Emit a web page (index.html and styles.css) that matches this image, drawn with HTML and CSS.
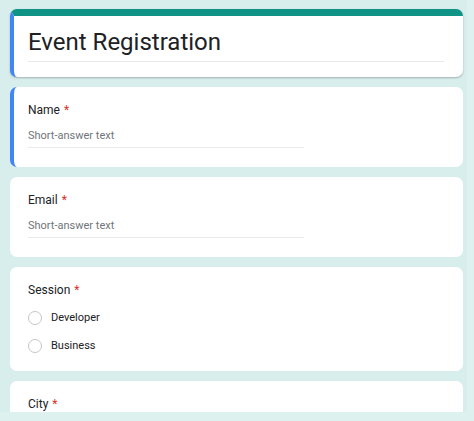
FILE: index.html
```html
<!DOCTYPE html>
<html lang="en">
<head>
<meta charset="utf-8">
<title>Event Registration</title>
<link rel="stylesheet" href="styles.css">
</head>
<body>
<div class="viewport">
  <main class="form">
    <section class="card header-card">
      <h1 class="form-title">Event Registration</h1>
    </section>

    <section class="card card-active">
      <div class="q-label">Name <span class="req">*</span></div>
      <div class="short-answer">Short-answer text</div>
    </section>

    <section class="card">
      <div class="q-label">Email <span class="req">*</span></div>
      <div class="short-answer">Short-answer text</div>
    </section>

    <section class="card card-choice">
      <div class="q-label">Session <span class="req">*</span></div>
      <div class="options">
        <label class="option"><span class="radio"></span><span class="opt-text">Developer</span></label>
        <label class="option"><span class="radio"></span><span class="opt-text">Business</span></label>
      </div>
    </section>

    <section class="card card-tail">
      <div class="q-label">City <span class="req">*</span></div>
    </section>
  </main>
</div>
</body>
</html>
```

FILE: styles.css
```css
html, body {
  margin: 0;
  padding: 0;
}

body {
  background: #ddf1ef;
  font-family: Roboto, "Liberation Sans", Arial, sans-serif;
  color: #202124;
  width: 474px;
  height: 421px;
  overflow: hidden;
}

.viewport {
  width: 467px;
  height: 412px;
  overflow: hidden;
  background: #d7eeec;
}

.form {
  display: flex;
  flex-direction: column;
  gap: 10px;
  padding: 9px 4px 0 10px;
}

.card {
  background: #ffffff;
  border-radius: 7px;
  padding: 15px 19px 19px 18px;
  box-sizing: border-box;
}

.header-card {
  border-top: 7px solid #0e9384;
  border-left: 4px solid #4285f4;
  padding: 10px 19px 15px 14px;
  box-shadow: 0 1px 2px rgba(60, 64, 67, 0.35);
}

.form-title {
  margin: 0;
  font-size: 24px;
  font-weight: 400;
  line-height: 32px;
  padding-bottom: 3px;
  border-bottom: 1px solid #e6e8e9;
  color: #202124;
}

.card-active {
  border-left: 4px solid #4285f4;
  padding-left: 14px;
}

.card-tail {
  min-height: 60px;
}

.q-label {
  font-size: 12px;
  line-height: 16px;
  color: #202124;
}

.req {
  color: #d93025;
  margin-left: 1px;
}

.short-answer {
  margin-top: 10px;
  width: 276px;
  font-size: 11px;
  line-height: 16px;
  color: #70757a;
  padding-bottom: 3px;
  border-bottom: 1px solid #e8eaed;
}

.card-choice {
  padding-bottom: 11px;
}

.options {
  display: flex;
  flex-direction: column;
  margin-top: 6px;
}

.option {
  display: flex;
  align-items: center;
  height: 28px;
  gap: 9px;
}

.radio {
  width: 14px;
  height: 14px;
  box-sizing: border-box;
  border: 1.5px solid #c4c6c8;
  border-radius: 50%;
  flex: none;
}

.opt-text {
  font-size: 11px;
  line-height: 16px;
  color: #202124;
}
```
